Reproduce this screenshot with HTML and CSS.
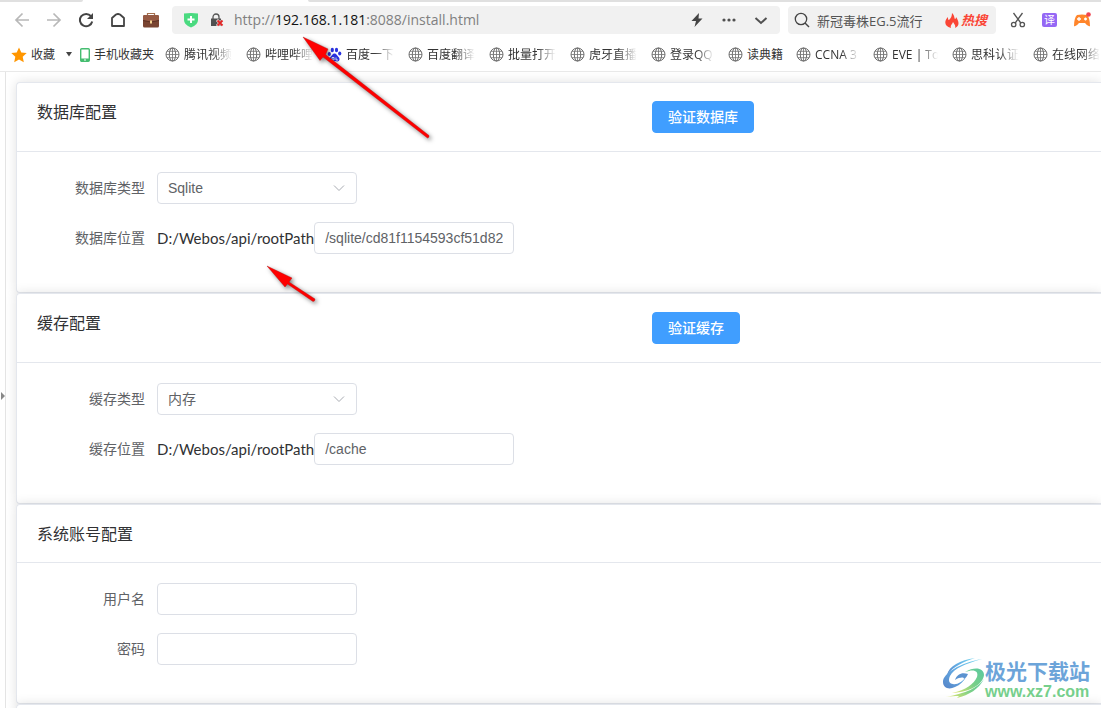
FILE: index.html
```html
<!DOCTYPE html>
<html lang="zh-CN">
<head>
<meta charset="utf-8">
<title>install</title>
<link rel="stylesheet" href="styles.css">
</head>
<body>
<svg class="defs" aria-hidden="true">
  <symbol id="globe" viewBox="0 0 15 15"><g fill="none" stroke="#707070" stroke-width="1"><circle cx="7.5" cy="7.5" r="6.5"/><ellipse cx="7.5" cy="7.5" rx="3.2" ry="6.5"/><path d="M7.5 1v13M1 7.500h13M2 4.300h11M2 10.700h11" stroke-width=".8"/></g></symbol>
  <symbol id="chevron" viewBox="0 0 14 14"><path d="M2 4.5l5 5 5-5" fill="none" stroke="#a8abb2" stroke-width="1"/></symbol>
</svg>
<header class="browser">
  <div class="tabstrip"><span class="tab-left"></span><span class="tab-right"></span></div>
  <div class="toolbar">
    <nav class="nav">
      <button class="icon-btn" aria-label="后退"><svg width="16" height="16" viewBox="0 0 16 16"><path d="M15 8H2M8.5 1.5L2 8l6.500 6.500" fill="none" stroke="#b8b8b8" stroke-width="1.700"/></svg></button>
      <button class="icon-btn" aria-label="前进"><svg width="16" height="16" viewBox="0 0 16 16"><path d="M1 8h13M7.500 1.500L14 8l-6.500 6.500" fill="none" stroke="#b8b8b8" stroke-width="1.700"/></svg></button>
      <button class="icon-btn" aria-label="刷新"><svg width="16" height="16" viewBox="0 0 16 16"><path d="M13 4.200A6.200 6.200 0 1 0 14.200 9.500" fill="none" stroke="#444" stroke-width="2"/><path d="M15 1v6H9z" fill="#444"/></svg></button>
      <button class="icon-btn" aria-label="主页"><svg width="16" height="16" viewBox="0 0 16 16"><path d="M2 14V6l4-3.500q2-1 4 0L14 6v8z" fill="none" stroke="#444" stroke-width="1.800" stroke-linejoin="round"/></svg></button>
      <button class="icon-btn" aria-label="工具箱"><svg width="18" height="16" viewBox="0 0 18 16"><path d="M5.500 3.500V1.500h7v2" fill="none" stroke="#a5704f" stroke-width="1.200"/><rect x="1" y="3" width="16" height="12.500" rx="1.500" fill="#794431"/><path d="M1 4.500Q1 3 2.500 3h13Q17 3 17 4.500V8q-8 3-16 0z" fill="#965a43"/><path d="M1 8.500q8 3 16 0" fill="none" stroke="#532b20" stroke-width=".8"/><rect x="8" y="8.500" width="2" height="3" fill="#f4d391"/></svg></button>
    </nav>
    <div class="address">
      <svg width="16" height="16" viewBox="0 0 16 16"><path d="M1 1.500q7-1 14 0V8q0 5-7 7.500Q1 13 1 8z" fill="#4ada80"/><path d="M8 4v7M4.500 7.500h7" stroke="#fff" stroke-width="2"/></svg>
      <svg class="lock" width="14" height="14" viewBox="0 0 14 14"><path d="M3 6V4a3 3 0 0 1 6 0v2" fill="none" stroke="#555" stroke-width="1.300"/><path d="M1 5.500h10V13H1z" fill="#505050"/><path d="M7 7l6 6M13 7l-6 6" stroke="#f0f0f0" stroke-width="3"/><path d="M7.500 7.500l5 5M12.500 7.500l-5 5" stroke="#df2525" stroke-width="1.900"/></svg>
      <div class="url">http://<span class="host">192.168.1.181</span>:8088/install.html</div>
      <div class="address-actions">
        <button class="icon-btn" aria-label="极速模式"><svg width="14" height="16" viewBox="0 0 14 16"><path d="M9 1L1.500 9H6l-1.500 6L12.500 6.500H8.500z" fill="#444"/></svg></button>
        <button class="icon-btn" aria-label="更多"><svg width="14" height="14" viewBox="0 0 14 14"><g fill="#505050"><circle cx="2" cy="7" r="1.600"/><circle cx="7" cy="7" r="1.600"/><circle cx="12" cy="7" r="1.600"/></g></svg></button>
        <button class="icon-btn" aria-label="展开"><svg width="14" height="14" viewBox="0 0 14 14"><path d="M1.500 5L7 10l5.500-5" fill="none" stroke="#505050" stroke-width="2"/></svg></button>
      </div>
    </div>
    <div class="search">
      <svg width="16" height="16" viewBox="0 0 16 16"><circle cx="7" cy="7" r="5.700" fill="none" stroke="#444" stroke-width="1.300"/><path d="M11 11l4 4" stroke="#444" stroke-width="1.400"/></svg>
      <input class="search-input" aria-label="搜索" value="新冠毒株EG.5流行">
      <a class="hot" href="#"><svg width="14" height="15" viewBox="0 0 14 15"><path d="M7 0c3 3 2 5 3 6 1 0 1-2 1-2 3 4 4 9-1 11 1-3-1-4-2-6-1 3-3 3-2 6C-1 13-1 8 3 4c0 2 0 3 1 3 2-2 3-4 3-7z" fill="#fa4535"/></svg>热搜</a>
    </div>
    <div class="tools">
      <button class="icon-btn" aria-label="截图"><svg width="16" height="16" viewBox="0 0 16 16"><g fill="none" stroke="#555" stroke-width="1.300"><path d="M3.500 1l7.300 10M12.500 1L5.200 11"/><circle cx="3.700" cy="12.500" r="2.200"/><circle cx="12.300" cy="12.500" r="2.200"/></g></svg></button>
      <button class="translate">译</button>
      <button class="icon-btn" aria-label="游戏"><svg width="18" height="16" viewBox="0 0 18 16"><path d="M4 3q5-1 10 0 3 3 3 11-2 1-5-3H6q-3 4-5 3Q1 6 4 3z" fill="#ff852b"/><path d="M6 5v4M4 7h4M11 7h3M12.500 5.500v3" stroke="#fff" stroke-width="1.300"/><circle cx="15.500" cy="2.500" r="2.300" fill="#f04450"/></svg></button>
    </div>
  </div>
  <nav class="bookmarks">
    <a class="mark favorites" href="#"><svg width="16" height="16" viewBox="0 0 16 16"><path d="M8 .5l2.300 5 5.400.6-4 3.700 1.100 5.500L8 12.600l-4.800 2.700 1.100-5.500-4-3.700 5.400-.6z" fill="#ff9600"/></svg>收藏<svg class="caret" width="8" height="5" viewBox="0 0 8 5"><path d="M1 0h6L4 4.500z" fill="#444"/></svg></a>
    <a class="mark phone" href="#"><svg width="10" height="14" viewBox="0 0 10 14"><rect x=".7" y=".7" width="8.600" height="12.600" rx="1" fill="#fff" stroke="#45bd70" stroke-width="1.400"/><path d="M1 10.500h8V13H1z" fill="#45bd70"/><path d="M4 12h2" stroke="#fff"/></svg>手机收藏夹</a>
    <a class="mark" href="#"><svg width="15" height="15"><use href="#globe"/></svg><span class="label fade">腾讯视频</span></a>
    <a class="mark" href="#"><svg width="15" height="15"><use href="#globe"/></svg><span class="label fade">哔哩哔哩</span></a>
    <a class="mark" href="#"><svg width="15" height="15" viewBox="0 0 15 15"><g fill="#2932e1"><ellipse cx="2.300" cy="7" rx="1.600" ry="2.100"/><ellipse cx="5.300" cy="3" rx="1.600" ry="2.200"/><ellipse cx="9.500" cy="3" rx="1.600" ry="2.200"/><ellipse cx="12.700" cy="6.500" rx="1.600" ry="2.100"/><path d="M7.500 6.500c2 0 2.500 2 4 3.500s1.500 4-1 4.500c-1 0-2-.5-3-.5s-2 .5-3 .5C2 14 2 11.500 3.500 10S5.500 6.500 7.500 6.500z"/></g><path d="M5 10.500h2v2.500H5zM9 10.500V13h2" fill="none" stroke="#fff" stroke-width=".8"/></svg><span class="label fade">百度一下</span></a>
    <a class="mark" href="#"><svg width="15" height="15"><use href="#globe"/></svg><span class="label fade">百度翻译</span></a>
    <a class="mark" href="#"><svg width="15" height="15"><use href="#globe"/></svg><span class="label fade">批量打开</span></a>
    <a class="mark" href="#"><svg width="15" height="15"><use href="#globe"/></svg><span class="label fade">虎牙直播</span></a>
    <a class="mark" href="#"><svg width="15" height="15"><use href="#globe"/></svg><span class="label fade medium">登录QQ</span></a>
    <a class="mark" href="#"><svg width="15" height="15"><use href="#globe"/></svg><span class="label short">读典籍</span></a>
    <a class="mark" href="#"><svg width="15" height="15"><use href="#globe"/></svg><span class="label fade medium">CCNA 3</span></a>
    <a class="mark" href="#"><svg width="15" height="15"><use href="#globe"/></svg><span class="label fade latin">EVE | To</span></a>
    <a class="mark" href="#"><svg width="15" height="15"><use href="#globe"/></svg><span class="label fade">思科认证</span></a>
    <a class="mark" href="#"><svg width="15" height="15"><use href="#globe"/></svg><span class="label fade">在线网络</span></a>
  </nav>
</header>
<div class="viewport">
  <aside class="gutter"><svg width="4" height="8" viewBox="0 0 4 8"><path d="M0 0v8l4-4z" fill="#888"/></svg></aside>
  <main class="page">
    <section class="card">
      <div class="card-header"><h2 class="title">数据库配置</h2><button class="primary">验证数据库</button></div>
      <form class="card-body">
        <div class="row"><label class="field-label" for="db-type">数据库类型</label><span class="select"><select id="db-type" class="control"><option>Sqlite</option></select><svg class="arrow" width="14" height="14"><use href="#chevron"/></svg></span></div>
        <div class="row"><label class="field-label" for="db-path">数据库位置</label><span class="prefix">D:/Webos/api/rootPath</span><input id="db-path" class="control" value="/sqlite/cd81f1154593cf51d82"></div>
      </form>
    </section>
    <section class="card">
      <div class="card-header"><h2 class="title">缓存配置</h2><button class="primary">验证缓存</button></div>
      <form class="card-body">
        <div class="row"><label class="field-label" for="cache-type">缓存类型</label><span class="select"><select id="cache-type" class="control"><option>内存</option></select><svg class="arrow" width="14" height="14"><use href="#chevron"/></svg></span></div>
        <div class="row"><label class="field-label" for="cache-path">缓存位置</label><span class="prefix">D:/Webos/api/rootPath</span><input id="cache-path" class="control" value="/cache"></div>
      </form>
    </section>
    <section class="card">
      <div class="card-header"><h2 class="title">系统账号配置</h2></div>
      <form class="card-body">
        <div class="row"><label class="field-label" for="user">用户名</label><input id="user" class="control"></div>
        <div class="row"><label class="field-label" for="password">密码</label><input id="password" class="control" type="password"></div>
      </form>
    </section>
    <section class="card next"></section>
  </main>
</div>
<svg class="pointers" width="440" height="310" viewBox="0 0 440 310" aria-hidden="true">
  <g fill="#fe0000" stroke="#b01010" stroke-width=".4"><path d="M303 37l25 12-2.500 5.500L429 135.500q.5 2-1.500 2.500L323 57l-3 3.500z"/><path d="M267 266l25 12-3 4 26 17q0 2.500-2 2.500L287.500 284l-2.500 3z"/></g>
</svg>
<div class="watermark">
  <svg width="42" height="42" viewBox="0 0 42 42" aria-hidden="true">
    <defs>
      <linearGradient id="blue" x1="1" y1="0" x2="0" y2="1"><stop offset="0" stop-color="#72d5ed"/><stop offset=".5" stop-color="#64aee5"/><stop offset="1" stop-color="#5684c8"/></linearGradient>
      <linearGradient id="green" x1="1" y1="0" x2="0" y2="1"><stop offset="0" stop-color="#5bc9a0"/><stop offset=".5" stop-color="#78cf88"/><stop offset="1" stop-color="#e6e66e"/></linearGradient>
    </defs>
    <path d="M32 0C17 2 6 8 4 17 11 8 20 4 32 0z" fill="url(#blue)"/>
    <path d="M39 1C17 5 0 15 0 24c0 6 6 8 12 5 5-2 9-6 11-10-4 5-9 8-13 7-4 0-5-4-3-8C11 10 22 6 39 1z" fill="url(#blue)"/>
    <path d="M12 22c2-6 7-8 13-6-1 2-2 4-4 5 0-2-4-2-9 1z" fill="#5b93d0"/>
    <path d="M22 14c8-3 14-2 12 5-3 7-11 13-25 16 19-1 31-9 32-18 0-7-9-9-19-3z" fill="url(#green)"/>
    <path d="M41 21c-6 9-18 14-38 18 5-1 9-1 13-1l-2 2c12-3 22-9 27-19z" fill="url(#green)"/>
  </svg>
  <div class="brand"><span class="brand-name">极光下载站</span><span class="brand-url">www.xz7.com</span></div>
</div>
</body>
</html>
```
FILE: styles.css
```css
* { box-sizing: border-box; }
html { height: 100%; }
body {
  margin: 0;
  height: 100%;
  position: relative;
  display: flex;
  flex-direction: column;
  overflow: hidden;
  background: #fff;
  color: #303133;
  font-family: "Open Sans", "Noto Sans CJK SC", sans-serif;
}
button, input, select { font: inherit; margin: 0; }
svg { display: block; flex: none; }
.defs { position: absolute; width: 0; height: 0; }

.browser { flex: none; border-bottom: 1px solid #e9e9e9; }
.tabstrip { display: flex; justify-content: space-between; height: 2px; }
.tab-left { width: 83px; background: #e0e0e0; border-bottom-right-radius: 2px; }
.tab-right { width: 72%; background: #e0e0e0; border-bottom-left-radius: 2px; }
.toolbar { display: flex; align-items: center; padding: 4px 10px 4px 14px; }
.nav { display: flex; align-items: center; gap: 16px; margin-right: 12px; }
.icon-btn { display: block; padding: 0; border: 0; background: none; }
.address {
  flex: 1;
  display: flex;
  align-items: center;
  min-width: 0;
  height: 28px;
  margin-right: 8px;
  padding: 0 12px 0 11px;
  border-radius: 4px;
  background: #f1f1f1;
}
.lock { margin-left: 11px; }
.url { margin-left: 10px; color: #808080; font-size: 14px; line-height: 20px; white-space: nowrap; }
.host { color: #111; }
.address-actions { display: flex; align-items: center; gap: 18px; margin-left: auto; }
.search {
  display: flex;
  align-items: center;
  width: 208px;
  height: 28px;
  padding: 0 9px 0 6px;
  border-radius: 4px;
  background: #f1f1f1;
}
.search-input {
  flex: 1;
  min-width: 0;
  padding: 0 0 0 7px;
  border: 0;
  background: none;
  color: #555;
  font-size: 13px;
}
.hot {
  display: flex;
  align-items: center;
  gap: 2px;
  color: #fa4535;
  font-size: 13px;
  font-style: italic;
  font-weight: 700;
  line-height: 20px;
  text-decoration: none;
}
.tools { display: flex; align-items: center; gap: 16px; margin-left: 14px; }
.translate {
  width: 15px;
  height: 14px;
  padding: 0;
  border: 0;
  border-radius: 2px;
  background: #9568f5;
  color: #fff;
  font-size: 11px;
  line-height: 14px;
}
.bookmarks {
  display: flex;
  align-items: center;
  gap: 14px;
  height: 33px;
  padding-left: 11px;
  overflow: hidden;
}
.mark {
  flex: none;
  display: flex;
  align-items: center;
  gap: 4px;
  color: #333;
  font-size: 12px;
  line-height: 20px;
  text-decoration: none;
}
.favorites { margin-right: -7px; }
.caret { margin-left: 6px; }
.phone { margin-right: -3px; }
.label { width: 48px; white-space: nowrap; }
.medium { width: 44px; }
.latin { width: 46px; }
.short { width: 35px; }
.fade { mask-image: linear-gradient(to right, #000 60%, transparent); }

.viewport { flex: 1; display: flex; min-height: 0; }
.gutter {
  flex: none;
  display: flex;
  align-items: center;
  width: 6px;
  padding-left: 1px;
  border-right: 1px solid #e4e4e4;
}
.gutter svg { margin-top: 12px; }
.page { flex: 1; min-width: 0; padding: 10px 0 0 10px; overflow: hidden; }
.card {
  border: 1px solid #e4e7ed;
  border-right: 0;
  border-radius: 4px 0 0 4px;
  background: #fff;
  box-shadow: 0 0 12px rgba(0, 0, 0, 0.12);
}
.next { height: 60px; }
.card-header {
  display: grid;
  grid-template-columns: 615px auto;
  justify-items: start;
  justify-content: start;
  align-items: start;
  padding: 18px 0 18px 20px;
  border-bottom: 1px solid #e4e7ed;
}
.title { margin: 0; padding-top: 2px; font-size: 16px; font-weight: 400; line-height: 19px; }
.primary {
  height: 32px;
  padding: 0 15px;
  border: 1px solid #409eff;
  border-radius: 4px;
  background: #409eff;
  color: #fff;
  font-size: 14px;
  font-weight: 500;
  line-height: 20px;
}
.card-body { padding: 20px; }
.row { display: flex; align-items: center; height: 32px; margin-bottom: 18px; }
.field-label {
  width: 120px;
  padding-right: 12px;
  color: #606266;
  font-size: 14px;
  line-height: 32px;
  text-align: right;
}
.prefix {
  min-width: 156px;
  font-family: Lato, sans-serif;
  font-size: 15px;
  line-height: 32px;
  white-space: nowrap;
}
.control {
  width: 200px;
  height: 32px;
  padding: 0 10px;
  border: 1px solid #dcdfe6;
  border-radius: 4px;
  background: #fff;
  color: #606266;
  font-family: "Liberation Sans", "Noto Sans CJK SC", sans-serif;
  font-size: 14px;
  appearance: none;
}
.select { position: relative; }
.select .control { display: block; }
.arrow { position: absolute; top: 9px; right: 11px; pointer-events: none; }

.pointers {
  position: absolute;
  top: 0;
  left: 0;
  pointer-events: none;
  filter: drop-shadow(2px 2px 2px rgba(0, 0, 0, 0.5));
}
.watermark {
  position: absolute;
  right: 11px;
  bottom: 7px;
  display: flex;
  align-items: center;
}
.brand { display: flex; flex-direction: column; }
.brand-name {
  color: #6ca4d9;
  font-family: "Noto Sans CJK SC", sans-serif;
  font-size: 21px;
  font-weight: 700;
  line-height: 26px;
}
.brand-url {
  color: #76cf8c;
  font-family: "Liberation Sans", sans-serif;
  font-size: 16px;
  font-weight: 700;
  line-height: 18px;
}
```
